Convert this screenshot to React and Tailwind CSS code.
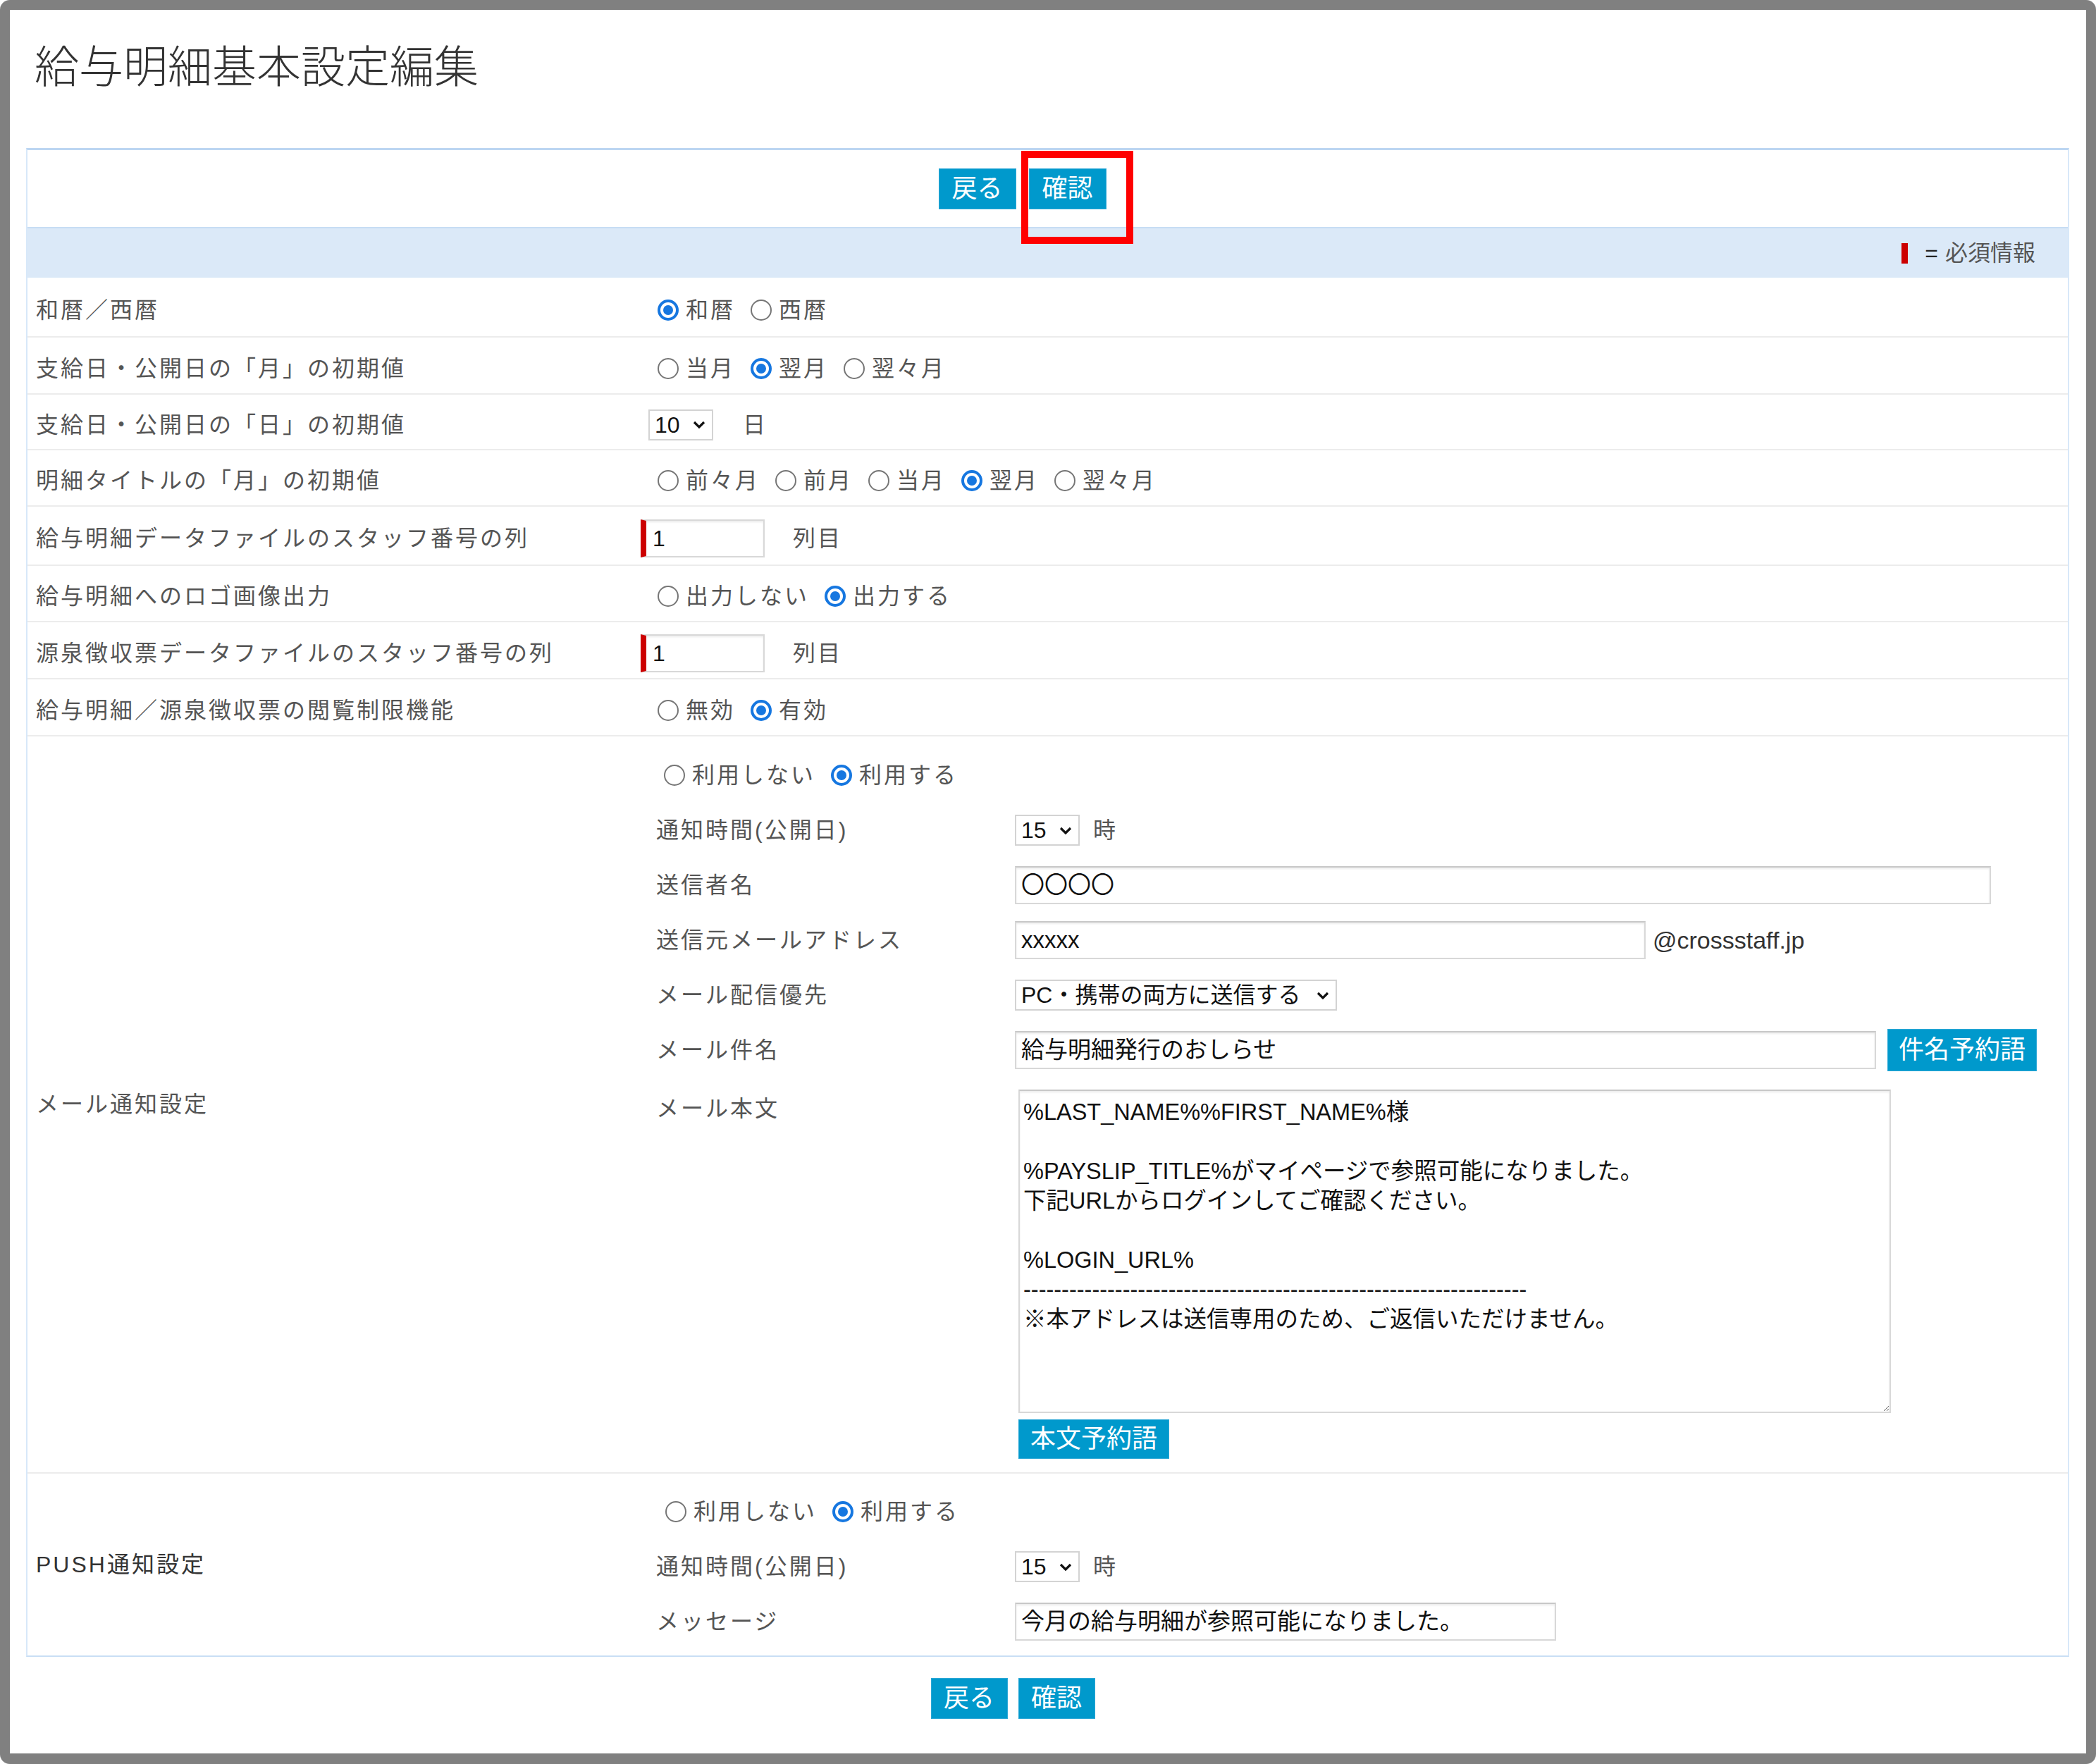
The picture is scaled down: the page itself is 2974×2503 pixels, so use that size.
import React from "react";

function Radio({ checked }) {
  if (checked)
    return (
      <span className="flex h-[30px] w-[30px] shrink-0 items-center justify-center rounded-full border-[4px] border-[#1677e0] bg-white">
        <span className="h-[14px] w-[14px] rounded-full bg-[#1677e0]" />
      </span>
    );
  return <span className="h-[30px] w-[30px] shrink-0 rounded-full border-2 border-[#767676] bg-white" />;
}

function Radios({ options, checked }) {
  return (
    <div className="flex items-center">
      {options.map((o, i) => (
        <div key={o} className="mr-[22px] flex items-center">
          <Radio checked={i === checked} />
          <span className="ml-[10px] text-[32px] leading-[48px] tracking-[3px] text-[#555]">{o}</span>
        </div>
      ))}
    </div>
  );
}

function Chevron() {
  return (
    <svg width="20" height="13" viewBox="0 0 20 13" className="shrink-0">
      <polyline points="3,3 10,10 17,3" fill="none" stroke="#111" strokeWidth="3.2" />
    </svg>
  );
}

function Select({ value, className }) {
  return (
    <div
      className={
        "flex h-[44px] items-center justify-between border-2 border-[#d3d3d3] bg-white pl-[7px] pr-[8px] text-[32px] leading-[40px] text-[#111] " +
        className
      }
    >
      <span>{value}</span>
      <Chevron />
    </div>
  );
}

function Input({ value, className }) {
  return (
    <div
      className={
        "flex h-[54px] items-center border-2 border-[#d8d8d8] border-t-[#c8c8c8] bg-white pl-[7px] text-[33px] leading-[48px] text-[#111] shadow-[inset_0_2px_3px_rgba(0,0,0,0.08)] " +
        className
      }
    >
      {value}
    </div>
  );
}

function RedInput() {
  return (
    <div className="flex h-[54px] w-[176px] items-center border-2 border-l-[8px] border-[#d8d8d8] border-l-[#cc0000] bg-white pl-[9px] text-[32px] leading-[48px] text-[#111] shadow-[inset_0_2px_3px_rgba(0,0,0,0.08)]">
      1
    </div>
  );
}

function Btn({ children, className }) {
  return (
    <div
      className={
        "flex items-center justify-center border border-[#2aa7d6] bg-[#0099cc] text-[36px] leading-none text-white " +
        className
      }
    >
      {children}
    </div>
  );
}

const label = "text-[32px] leading-[48px] tracking-[3px] text-[#555]";

function Row({ h, title, children }) {
  return (
    <div className={"grid grid-cols-[870px_1fr] border-b-2 border-[#ececec] pt-[8px] " + h}>
      <div className={"flex items-center pl-[12px] " + label}>{title}</div>
      <div className="flex items-center">{children}</div>
    </div>
  );
}

function SubRow({ title, children }) {
  return (
    <div className="grid h-[78px] grid-cols-[509px_1fr] items-center">
      <div className={label}>{title}</div>
      <div className="flex items-center">{children}</div>
    </div>
  );
}

const body = `%LAST_NAME%%FIRST_NAME%様

%PAYSLIP_TITLE%がマイページで参照可能になりました。
下記URLからログインしてご確認ください。

%LOGIN_URL%
------------------------------------------------------------------
※本アドレスは送信専用のため、ご返信いただけません。`;

export default function App() {
  return (
    <div className="relative h-[2503px] w-[2974px] rounded-[14px] bg-[#808080] p-[14px] pb-[15px] font-['Liberation_Sans','Noto_Sans_CJK_JP',sans-serif]">
      <div className="flex h-full flex-col bg-white">
        <div className="pl-[35px] pt-[44px] font-['Noto_Sans_CJK_JP',sans-serif] text-[63px] font-light leading-[63px] text-[#333]">
          給与明細基本設定編集
        </div>

        <div className="ml-[23px] mr-[24px] mt-[89px] border-x-2 border-b-2 border-t-[3px] border-x-[#d8e8f9] border-b-[#c9dff5] border-t-[#bcd6f2]">
          <div className="flex h-[109px] items-center justify-center gap-[18px] pr-[72px]">
            <Btn className="h-[58px] w-[110px]">戻る</Btn>
            <Btn className="h-[58px] w-[110px]">確認</Btn>
          </div>
          <div className="flex h-[72px] items-center justify-end border-t-2 border-[#c7ddf4] bg-[#dbe9f8] pr-[46px]">
            <span className="mr-[24px] h-[29px] w-[9px] bg-[#cc0000]" />
            <span className="text-[32px] text-[#222]">=</span>
            <span className="ml-[10px] text-[32px] text-[#555]">必須情報</span>
          </div>

          <Row h="h-[85px]" title="和暦／西暦">
            <div className="pl-[24px]">
              <Radios options={["和暦", "西暦"]} checked={0} />
            </div>
          </Row>
          <Row h="h-[81px]" title="支給日・公開日の「月」の初期値">
            <div className="pl-[24px]">
              <Radios options={["当月", "翌月", "翌々月"]} checked={1} />
            </div>
          </Row>
          <Row h="h-[79px]" title="支給日・公開日の「日」の初期値">
            <div className="flex items-center pl-[11px]">
              <Select value="10" className="w-[92px]" />
              <span className={"ml-[42px] " + label}>日</span>
            </div>
          </Row>
          <Row h="h-[80px]" title="明細タイトルの「月」の初期値">
            <div className="pl-[24px]">
              <Radios options={["前々月", "前月", "当月", "翌月", "翌々月"]} checked={3} />
            </div>
          </Row>
          <Row h="h-[84px]" title="給与明細データファイルのスタッフ番号の列">
            <RedInput />
            <span className={"ml-[40px] " + label}>列目</span>
          </Row>
          <Row h="h-[80px]" title="給与明細へのロゴ画像出力">
            <div className="pl-[24px]">
              <Radios options={["出力しない", "出力する"]} checked={1} />
            </div>
          </Row>
          <Row h="h-[81px]" title="源泉徴収票データファイルのスタッフ番号の列">
            <RedInput />
            <span className={"ml-[40px] " + label}>列目</span>
          </Row>
          <Row h="h-[81px]" title="給与明細／源泉徴収票の閲覧制限機能">
            <div className="pl-[24px]">
              <Radios options={["無効", "有効"]} checked={1} />
            </div>
          </Row>

          {/* mail section */}
          <div className="grid grid-cols-[870px_1fr] border-b-2 border-[#ececec]">
            <div className={"flex items-center pl-[12px] " + label}>メール通知設定</div>
            <div className="pb-[19px] pl-[22px] pt-[16px]">
              <div className="flex h-[78px] items-center pl-[11px]">
                <Radios options={["利用しない", "利用する"]} checked={1} />
              </div>
              <SubRow title="通知時間(公開日)">
                <Select value="15" className="w-[92px]" />
                <span className={"ml-[19px] " + label}>時</span>
              </SubRow>
              <SubRow title="送信者名">
                <Input value="〇〇〇〇" className="w-[1385px]" />
              </SubRow>
              <SubRow title="送信元メールアドレス">
                <Input value="xxxxx" className="w-[895px]" />
                <span className="ml-[10px] text-[34px] text-[#333]">@crossstaff.jp</span>
              </SubRow>
              <SubRow title="メール配信優先">
                <Select value="PC・携帯の両方に送信する" className="w-[457px]" />
              </SubRow>
              <SubRow title="メール件名">
                <Input value="給与明細発行のおしらせ" className="w-[1222px]" />
                <Btn className="ml-[16px] h-[60px] w-[212px]">件名予約語</Btn>
              </SubRow>
              <div className="mt-[17px] grid grid-cols-[509px_1fr]">
                <div className={"pt-[3px] " + label}>メール本文</div>
                <div className="pl-[5px]">
                  <textarea
                    readOnly
                    value={body}
                    className="block h-[459px] w-[1238px] border-2 border-[#d8d8d8] border-t-[#c8c8c8] bg-white pl-[5px] pt-[9px] font-['Liberation_Sans','Noto_Sans_CJK_JP',sans-serif] text-[32.5px] leading-[42px] text-[#111] shadow-[inset_0_2px_3px_rgba(0,0,0,0.08)] outline-none"
                  />
                  <Btn className="mt-[9px] h-[56px] w-[214px]">本文予約語</Btn>
                </div>
              </div>
            </div>
          </div>

          {/* push section */}
          <div className="grid grid-cols-[870px_1fr]">
            <div className="flex items-center pl-[12px] text-[32px] leading-[48px] tracking-[3px] text-[#333]">PUSH通知設定</div>
            <div className="pb-[9px] pl-[22px] pt-[15px]">
              <div className="flex h-[78px] items-center pl-[13px]">
                <Radios options={["利用しない", "利用する"]} checked={1} />
              </div>
              <SubRow title="通知時間(公開日)">
                <Select value="15" className="w-[92px]" />
                <span className={"ml-[19px] " + label}>時</span>
              </SubRow>
              <SubRow title="メッセージ">
                <Input value="今月の給与明細が参照可能になりました。" className="w-[768px]" />
              </SubRow>
            </div>
          </div>
        </div>

        <div className="mt-[30px] flex justify-center gap-[15px] pr-[100px]">
          <Btn className="h-[58px] w-[109px]">戻る</Btn>
          <Btn className="h-[58px] w-[109px]">確認</Btn>
        </div>
      </div>

      <div className="absolute left-[1449px] top-[214px] h-[132px] w-[159px] border-[10px] border-[#ff0000]" />
    </div>
  );
}
